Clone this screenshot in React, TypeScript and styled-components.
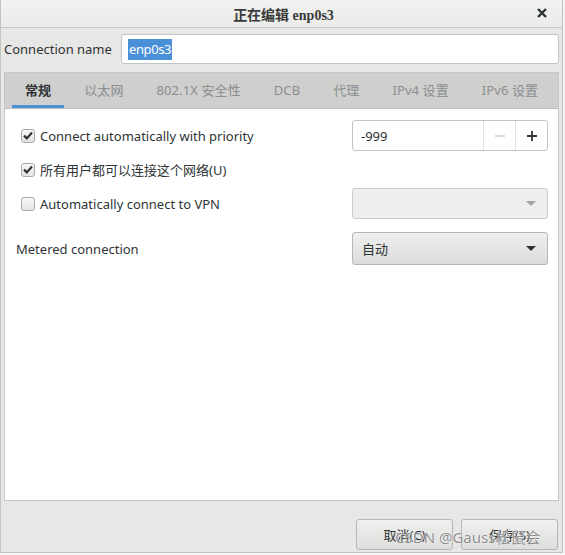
import React, { useState } from 'react'
import styled, { createGlobalStyle } from 'styled-components'

const GlobalStyle = createGlobalStyle`
  html, body {
    margin: 0;
    padding: 0;
    background: #f4f4f4;
  }
  body {
    font-family: "Noto Sans", "Noto Sans CJK SC", sans-serif;
    font-size: 13px;
    color: #2e3436;
  }
`

const Window = styled.div`
  position: relative;
  width: 563px;
  height: 553px;
  box-sizing: border-box;
  border: 1px solid #c2c2c0;
  border-top: none;
  background: #e7e7e6;
  display: flex;
  flex-direction: column;
`

const TitleBar = styled.div`
  height: 27px;
  flex: none;
  background: linear-gradient(#f2f2f1, #ebebea);
  border-bottom: 1px solid #c8c8c6;
  display: flex;
  align-items: center;
  justify-content: center;
  position: relative;
`

const Title = styled.div`
  font-family: "Liberation Serif", "Noto Sans CJK SC", serif;
  font-weight: 700;
  font-size: 14px;
  color: #3a3a3a;
  margin-left: 4px;
`

const CloseButton = styled.div`
  position: absolute;
  right: 14px;
  top: 7px;
  width: 12px;
  height: 12px;
  display: flex;
`

const NameRow = styled.div`
  display: flex;
  align-items: center;
  margin: 6px 3px 0 3px;
  height: 30px;
`

const NameLabel = styled.div`
  width: 117px;
  flex: none;
  color: #2e3436;
`

const TextInput = styled.div`
  flex: 1;
  height: 30px;
  box-sizing: border-box;
  border: 1px solid #c4c4c2;
  border-radius: 3px;
  background: #fff;
  display: flex;
  align-items: center;
  padding-left: 6px;
`

const Selection = styled.span`
  background: #4a90d9;
  color: #fff;
  line-height: 21px;
  letter-spacing: -0.4px;
  padding: 0 1px;
`

const Notebook = styled.div`
  margin: 8px 3px 0 3px;
  height: 429px;
  box-sizing: border-box;
  border: 1px solid #c6c6c4;
  display: flex;
  flex-direction: column;
`

const TabBar = styled.div`
  height: 35px;
  flex: none;
  background: #cfcfce;
  display: flex;
  gap: 7px;
  padding-left: 7px;
  border-bottom: 1px solid #bdbdbc;
`

const Tab = styled.div<{ $active?: boolean }>`
  padding: 0 13px;
  display: flex;
  align-items: center;
  box-sizing: border-box;
  border-bottom: 3px solid ${(p) => (p.$active ? '#4a90d9' : 'transparent')};
  padding-top: 1px;
  letter-spacing: 0.1px;
  color: ${(p) => (p.$active ? '#2e3436' : '#8b8e8f')};
  font-weight: ${(p) => (p.$active ? 700 : 400)};
  white-space: nowrap;
`

const Page = styled.div`
  flex: 1;
  background: #fff;
  padding: 11px 10px 0 11px;
  display: flex;
  flex-direction: column;
  gap: 6px;
`

const Row = styled.div<{ $height: number; $extra?: number }>`
  height: ${(p) => p.$height}px;
  margin-top: ${(p) => p.$extra || 0}px;
  display: flex;
  align-items: center;
  justify-content: space-between;
`

const CheckLabel = styled.label`
  display: flex;
  align-items: center;
  gap: 5px;
  padding-left: 5px;
  color: #2e3436;
`

const Box = styled.span`
  width: 14px;
  height: 14px;
  box-sizing: border-box;
  border: 1px solid #a9aaa8;
  border-radius: 3px;
  background: linear-gradient(#f8f8f7, #e3e3e2);
  display: flex;
  align-items: center;
  justify-content: center;
`

const PlainLabel = styled.div`
  color: #2e3436;
`

const SpinBox = styled.div`
  width: 196px;
  height: 31px;
  box-sizing: border-box;
  border: 1px solid #c4c4c2;
  border-radius: 3px;
  background: #fff;
  display: flex;
`

const SpinValue = styled.div`
  flex: 1;
  display: flex;
  align-items: center;
  padding-left: 8px;
`

const SpinButton = styled.div<{ $disabled?: boolean }>`
  width: 31px;
  border-left: 1px solid #e2e2e1;
  display: flex;
  align-items: center;
  justify-content: center;
  color: ${(p) => (p.$disabled ? '#c4c4c4' : '#2e3436')};
`

const Combo = styled.div<{ $disabled?: boolean }>`
  width: 196px;
  height: 100%;
  box-sizing: border-box;
  border: 1px solid ${(p) => (p.$disabled ? '#cbcbca' : '#b6b6b4')};
  border-radius: 3px;
  background: ${(p) =>
    p.$disabled ? '#efefee' : 'linear-gradient(#efefee, #dcdcdb)'};
  display: flex;
  align-items: center;
  justify-content: space-between;
  padding: 0 11px 0 9px;
  color: #2e3436;
`

const Arrow = styled.span<{ $disabled?: boolean }>`
  width: 0;
  height: 0;
  border-left: 5px solid transparent;
  border-right: 5px solid transparent;
  border-top: 5px solid ${(p) => (p.$disabled ? '#a4a4a4' : '#2e3436')};
`

const ButtonRow = styled.div`
  display: flex;
  justify-content: flex-end;
  gap: 8px;
  padding: 18px 4px 0 0;
`

const DialogButton = styled.div`
  width: 97px;
  height: 31px;
  box-sizing: border-box;
  border: 1px solid #b6b6b4;
  border-radius: 3px;
  background: linear-gradient(#f0f0ef, #dededd);
  display: flex;
  align-items: center;
  justify-content: center;
  color: #2e3436;
`

const Watermark = styled.div`
  position: absolute;
  left: 394px;
  top: 526px;
  font-family: "Noto Sans", "Noto Sans CJK SC", sans-serif;
  font-size: 15px;
  color: rgba(110, 110, 110, 0.8);
  text-shadow: 0 0 1px #fff, 0 0 1px #fff;
  pointer-events: none;
  white-space: nowrap;
`

const CheckMark = () => (
  <svg width="10" height="9" viewBox="0 0 10 9">
    <path d="M1 4.6 L3.8 7.4 L9 1.6" fill="none" stroke="#2e3436" strokeWidth="2.2" />
  </svg>
)

const Check: React.FC<{ checked?: boolean; text: string }> = ({ checked, text }) => (
  <CheckLabel>
    <Box>{checked && <CheckMark />}</Box>
    {text}
  </CheckLabel>
)

const tabs = ['常规', '以太网', '802.1X 安全性', 'DCB', '代理', 'IPv4 设置', 'IPv6 设置']

const App: React.FC = () => {
  const [active] = useState(0)

  return (
    <>
      <GlobalStyle />
      <Window>
        <TitleBar>
          <Title>正在编辑 enp0s3</Title>
          <CloseButton>
            <svg width="12" height="12" viewBox="0 0 12 12">
              <path d="M2 2 L10 10 M10 2 L2 10" stroke="#2e3436" strokeWidth="2.4" />
            </svg>
          </CloseButton>
        </TitleBar>
        <NameRow>
          <NameLabel>Connection name</NameLabel>
          <TextInput>
            <Selection>enp0s3</Selection>
          </TextInput>
        </NameRow>
        <Notebook>
          <TabBar>
            {tabs.map((t, i) => (
              <Tab key={t} $active={i === active}>
                {t}
              </Tab>
            ))}
          </TabBar>
          <Page>
            <Row $height={31}>
              <Check checked text="Connect automatically with priority" />
              <SpinBox>
                <SpinValue>-999</SpinValue>
                <SpinButton $disabled>
                  <svg width="12" height="12" viewBox="0 0 12 12">
                    <path d="M1 6 H11" stroke="currentColor" strokeWidth="1.2" />
                  </svg>
                </SpinButton>
                <SpinButton>
                  <svg width="12" height="12" viewBox="0 0 12 12">
                    <path d="M1 6 H11 M6 1 V11" stroke="currentColor" strokeWidth="1.8" />
                  </svg>
                </SpinButton>
              </SpinBox>
            </Row>
            <Row $height={25}>
              <Check checked text="所有用户都可以连接这个网络(U)" />
            </Row>
            <Row $height={31}>
              <Check text="Automatically connect to VPN" />
              <Combo $disabled>
                <span />
                <Arrow $disabled />
              </Combo>
            </Row>
            <Row $height={33} $extra={7}>
              <PlainLabel>Metered connection</PlainLabel>
              <Combo>
                <span>自动</span>
                <Arrow />
              </Combo>
            </Row>
          </Page>
        </Notebook>
        <ButtonRow>
          <DialogButton>取消(C)</DialogButton>
          <DialogButton>保存(S)</DialogButton>
        </ButtonRow>
        <Watermark>CSDN @Gauss松鼠会</Watermark>
      </Window>
    </>
  )
}

export default App
